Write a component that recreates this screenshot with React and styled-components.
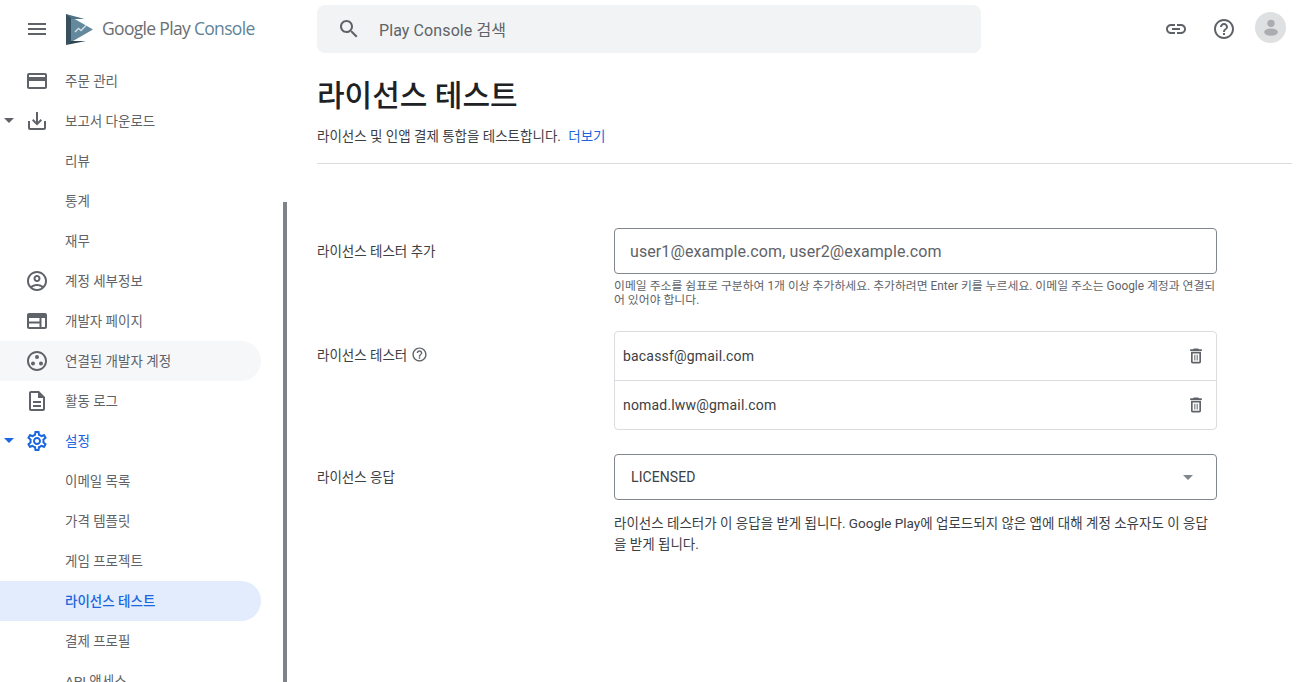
import React from "react";
import styled, { createGlobalStyle } from "styled-components";

const ICONS = {
  menu: "M3 18h18v-2H3v2zm0-5h18v-2H3v2zm0-7v2h18V6H3z",
  card: "M20 4H4c-1.11 0-1.99.89-1.99 2L2 18c0 1.11.89 2 2 2h16c1.11 0 2-.89 2-2V6c0-1.11-.89-2-2-2zm0 14H4v-6h16v6zm0-10H4V6h16v2z",
  download: "M19 12v7H5v-7H3v7c0 1.1.9 2 2 2h14c1.1 0 2-.9 2-2v-7h-2zm-6 .67l2.59-2.58L17 11.5l-5 5-5-5 1.41-1.41L11 12.67V3h2z",
  account: "M12 2C6.48 2 2 6.48 2 12s4.48 10 10 10 10-4.48 10-10S17.52 2 12 2zM7.35 18.5C8.66 17.56 10.26 17 12 17s3.34.56 4.65 1.5c-1.31.94-2.91 1.5-4.65 1.5s-3.34-.56-4.65-1.5zm10.79-1.38C16.45 15.8 14.32 15 12 15s-4.45.8-6.14 2.12C4.7 15.73 4 13.95 4 12c0-4.42 3.58-8 8-8s8 3.58 8 8c0 1.95-.7 3.73-1.86 5.12zM12 6c-1.93 0-3.5 1.57-3.5 3.5S10.07 13 12 13s3.5-1.57 3.5-3.5S13.93 6 12 6zm0 5c-.83 0-1.5-.67-1.5-1.5S11.17 8 12 8s1.5.67 1.5 1.5S12.83 11 12 11z",
  web: "M20 4H4c-1.1 0-1.99.9-1.99 2L2 18c0 1.1.9 2 2 2h16c1.1 0 2-.9 2-2V6c0-1.1-.9-2-2-2zM4 9h10.5v3.5H4V9zm0 5.5h10.5V18H4v-3.5zM20 18h-3.5V9H20v9z",
  linked: "M12 2C6.48 2 2 6.48 2 12s4.48 10 10 10 10-4.48 10-10S17.52 2 12 2zm0 18c-4.41 0-8-3.59-8-8s3.59-8 8-8 8 3.59 8 8-3.59 8-8 8zM12 6a2 2 0 1 0 0 4 2 2 0 0 0 0-4zM8 12.5a2 2 0 1 0 0 4 2 2 0 0 0 0-4zM16 12.5a2 2 0 1 0 0 4 2 2 0 0 0 0-4z",
  file: "M8 16h8v2H8zm0-4h8v2H8zm6-10H6c-1.1 0-2 .9-2 2v16c0 1.1.89 2 1.99 2H18c1.1 0 2-.9 2-2V8l-6-6zm4 18H6V4h7v5h5v11z",
  settings: "M19.43 12.98c.04-.32.07-.64.07-.98 0-.34-.03-.66-.07-.98l2.11-1.65c.19-.15.24-.42.12-.64l-2-3.46c-.09-.16-.26-.25-.44-.25-.06 0-.12.01-.17.03l-2.49 1c-.52-.4-1.08-.73-1.69-.98l-.38-2.65C14.46 2.18 14.25 2 14 2h-4c-.25 0-.46.18-.49.42l-.38 2.65c-.61.25-1.17.59-1.69.98l-2.49-1c-.06-.02-.12-.03-.18-.03-.17 0-.34.09-.43.25l-2 3.46c-.13.22-.07.49.12.64l2.11 1.65c-.04.32-.07.65-.07.98 0 .33.03.66.07.98l-2.11 1.65c-.19.15-.24.42-.12.64l2 3.46c.09.16.26.25.44.25.06 0 .12-.01.17-.03l2.49-1c.52.4 1.08.73 1.69.98l.38 2.65c.03.24.24.42.49.42h4c.25 0 .46-.18.49-.42l.38-2.65c.61-.25 1.17-.59 1.69-.98l2.49 1c.06.02.12.03.18.03.17 0 .34-.09.43-.25l2-3.46c.12-.22.07-.49-.12-.64l-2.11-1.65zm-1.98-1.71c.04.31.05.52.05.73 0 .21-.02.43-.05.73l-.14 1.13.89.7 1.08.84-.7 1.21-1.27-.51-1.04-.42-.9.68c-.43.32-.84.56-1.25.73l-1.06.43-.16 1.13-.2 1.35h-1.4l-.19-1.35-.16-1.13-1.06-.43c-.43-.18-.83-.41-1.23-.71l-.91-.7-1.06.43-1.27.51-.7-1.21 1.08-.84.89-.7-.14-1.13c-.03-.31-.05-.54-.05-.74s.02-.43.05-.73l.14-1.13-.89-.7-1.08-.84.7-1.21 1.27.51 1.04.42.9-.68c.43-.32.84-.56 1.25-.73l1.06-.43.16-1.13.2-1.35h1.39l.19 1.35.16 1.13 1.06.43c.43.18.83.41 1.23.71l.91.7 1.06-.43 1.27-.51.7 1.21-1.07.85-.89.7.14 1.13zM12 8c-2.21 0-4 1.79-4 4s1.79 4 4 4 4-1.79 4-4-1.79-4-4-4zm0 6c-1.1 0-2-.9-2-2s.9-2 2-2 2 .9 2 2-.9 2-2 2z",
  search: "M15.5 14h-.79l-.28-.27C15.41 12.59 16 11.11 16 9.5 16 5.91 13.09 3 9.5 3S3 5.91 3 9.5 5.91 16 9.5 16c1.61 0 3.09-.59 4.23-1.57l.27.28v.79l5 4.99L20.49 19l-4.99-5zm-6 0C7.01 14 5 11.99 5 9.5S7.01 5 9.5 5 14 7.01 14 9.5 11.99 14 9.5 14z",
  link: "M3.9 12c0-1.71 1.39-3.1 3.1-3.1h4V7H7c-2.76 0-5 2.24-5 5s2.24 5 5 5h4v-1.9H7c-1.71 0-3.1-1.39-3.1-3.1zM8 13h8v-2H8v2zm9-6h-4v1.9h4c1.71 0 3.1 1.39 3.1 3.1s-1.39 3.1-3.1 3.1h-4V17h4c2.76 0 5-2.24 5-5s-2.24-5-5-5z",
  help: "M11 18h2v-2h-2v2zm1-16C6.48 2 2 6.48 2 12s4.48 10 10 10 10-4.48 10-10S17.52 2 12 2zm0 18c-4.41 0-8-3.59-8-8s3.59-8 8-8 8 3.59 8 8-3.59 8-8 8zm0-14c-2.21 0-4 1.79-4 4h2c0-1.1.9-2 2-2s2 .9 2 2c0 2-3 1.75-3 5h2c0-2.25 3-2.5 3-5 0-2.21-1.79-4-4-4z",
  trash: "M16 9v10H8V9h8m-1.5-6h-5l-1 1H5v2h14V4h-3.5l-1-1zM18 7H6v12c0 1.1.9 2 2 2h8c1.1 0 2-.9 2-2V7zM10 10.5h1.2v7H10zM12.8 10.5H14v7h-1.2z",
};

const NAV = [
  { label: "주문 관리", icon: "card" },
  { label: "보고서 다운로드", icon: "download", caret: true },
  { label: "리뷰" },
  { label: "통계" },
  { label: "재무" },
  { label: "계정 세부정보", icon: "account" },
  { label: "개발자 페이지", icon: "web" },
  { label: "연결된 개발자 계정", icon: "linked", hovered: true },
  { label: "활동 로그", icon: "file" },
  { label: "설정", icon: "settings", caret: true, blue: true },
  { label: "이메일 목록" },
  { label: "가격 템플릿" },
  { label: "게임 프로젝트" },
  { label: "라이선스 테스트", selected: true },
  { label: "결제 프로필" },
  { label: "API 액세스" },
];

const GlobalStyle = createGlobalStyle`
  html, body {
    margin: 0;
    height: 100%;
    overflow: hidden;
    background: #fff;
  }
  body {
    font-family: Roboto, "Noto Sans CJK KR", sans-serif;
    color: #202124;
  }
`;

const Page = styled.div`
  height: 682px;
  display: flex;
  flex-direction: column;
  overflow: hidden;
`;

const TopBar = styled.header`
  height: 61px;
  flex: none;
  display: flex;
  align-items: flex-start;
`;

const Brand = styled.div`
  width: 317px;
  height: 58px;
  flex: none;
  display: flex;
  align-items: center;
  padding-left: 25px;
  box-sizing: border-box;
`;

const LogoMark = styled.svg`
  display: block;
  flex: none;
  margin-left: 1px;
`;

const LogoText = styled.span`
  margin-left: 8px;
  padding-bottom: 3px;
  font-family: "Open Sans", sans-serif;
  font-size: 17.5px;
  letter-spacing: -0.68px;
  white-space: nowrap;
  color: #6b6e71;
  b {
    font-weight: 400;
    color: #5f8497;
  }
`;

const SearchBox = styled.div`
  width: 664px;
  height: 48px;
  margin-top: 5px;
  flex: none;
  border-radius: 8px;
  background: #f1f3f4;
  display: flex;
  align-items: center;
  padding-left: 20px;
  box-sizing: border-box;
  gap: 18px;
  font-size: 16px;
  letter-spacing: 0.1px;
  color: #5f6368;
`;

const TopActions = styled.div`
  flex: 1;
  height: 58px;
  display: flex;
  align-items: center;
  justify-content: flex-end;
  padding-right: 18px;
  gap: 24px;
`;

const Avatar = styled.div`
  width: 31px;
  height: 31px;
  margin: 0 0 4px -5px;
  border-radius: 50%;
  background: #dfe0e1;
  display: flex;
  align-items: center;
  justify-content: center;
`;

const Body = styled.div`
  flex: 1;
  min-height: 0;
  display: flex;
`;

const Sidebar = styled.nav`
  position: relative;
  width: 287px;
  flex: none;
  overflow: hidden;
`;

const ScrollThumb = styled.div`
  position: absolute;
  right: 0;
  top: 141px;
  bottom: 0;
  width: 4px;
  background: #7f8389;
`;

const NavRow = styled.div`
  position: relative;
  width: 261px;
  height: 40px;
  display: flex;
  align-items: center;
  padding-left: 25px;
  box-sizing: border-box;
  border-radius: 0 20px 20px 0;
  font-size: 13.5px;
  font-weight: ${(p) => (p.$selected ? 500 : 400)};
  color: ${(p) => (p.$blue || p.$selected ? "#1a66e0" : "#5f6368")};
  background: ${(p) => (p.$selected ? "#e2ecfd" : p.$hovered ? "#f6f7f9" : "transparent")};
`;

const NavLabel = styled.span`
  padding-bottom: 3px;
  white-space: nowrap;
`;

const Caret = styled.span`
  position: absolute;
  left: 4px;
  top: 17px;
  border-left: 5px solid transparent;
  border-right: 5px solid transparent;
  border-top: 5px solid ${(p) => (p.$blue ? "#1a66e0" : "#5f6368")};
`;

const IconSlot = styled.span`
  width: 24px;
  height: 24px;
  flex: none;
  margin-right: 16px;
`;

const Main = styled.main`
  flex: 1;
  min-width: 0;
  padding: 0 12px 0 30px;
`;

const Title = styled.h1`
  margin: 15px 0 0;
  height: 40px;
  line-height: 40px;
  font-size: 30px;
  font-weight: 500;
  color: #202124;
`;

const Intro = styled.p`
  margin: 10px 0 0;
  height: 20px;
  line-height: 20px;
  font-size: 13.5px;
  color: #3c4043;
  a {
    margin-left: 4px;
    color: #1a66e0;
    text-decoration: none;
  }
`;

const Divider = styled.hr`
  margin: 17px 0 0;
  border: 0;
  border-top: 1px solid #dadce0;
`;

const Form = styled.div`
  margin-top: 64px;
  display: grid;
  grid-template-columns: 297px 603px;
`;

const FieldLabel = styled.div`
  display: flex;
  align-items: center;
  gap: 4px;
  box-sizing: border-box;
  padding-bottom: 3px;
  height: ${(p) => p.$height}px;
  font-size: 13.5px;
  color: #3c4043;
`;

const Control = styled.div`
  margin-bottom: ${(p) => p.$gap}px;
`;

const TextBox = styled.div`
  height: 46px;
  box-sizing: border-box;
  border: 1px solid #80868b;
  border-radius: 4px;
  display: flex;
  align-items: center;
  padding: 0 15px;
  font-size: 16px;
  letter-spacing: 0.09px;
  color: #5f6368;
`;

const SelectBox = styled(TextBox)`
  justify-content: space-between;
  padding: 0 23px 0 16px;
  font-size: 14px;
  color: #3c4043;
`;

const SelectCaret = styled.span`
  border-left: 5px solid transparent;
  border-right: 5px solid transparent;
  border-top: 5px solid #80868b;
`;

const Hint = styled.p`
  margin: 5px 0 0;
  font-size: 11.85px;
  line-height: 14px;
  color: #5f6368;
`;

const Note = styled.p`
  margin: 13px 0 0;
  font-size: 13.5px;
  line-height: 21px;
  color: #3c4043;
`;

const TesterList = styled.div`
  border: 1px solid #dadce0;
  border-radius: 4px;
`;

const TesterRow = styled.div`
  height: 48px;
  display: flex;
  align-items: center;
  justify-content: space-between;
  padding: 0 10px 0 8px;
  font-size: 14px;
  letter-spacing: 0.18px;
  color: #3c4043;
  & + & {
    border-top: 1px solid #dadce0;
  }
`;

function Icon({ name, size = 24, color = "#5f6368" }) {
  return (
    <svg width={size} height={size} viewBox="0 0 24 24" fill={color} style={{ display: "block", flex: "none" }}>
      <path d={ICONS[name]} />
    </svg>
  );
}

function Logo() {
  return (
    <LogoMark width="28" height="31" viewBox="0 0 28 31">
      <path d="M0 0 L27 15.5 L0 31 Z" fill="#64899d" />
      <path d="M0 0 L5 5 H18.5 L0 0 Z" fill="#4e7286" />
      <path d="M0 0 L5 4 V27 L0 31 Z" fill="#37505f" />
      <path d="M0 31 L5 27 H20 L0 31 Z" fill="#2f4552" />
      <path d="M9 18 L12.5 14.5 L15 16.5 L20 11.5" fill="none" stroke="#cfdde5" strokeWidth="1.5" />
    </LogoMark>
  );
}

export default function App() {
  return (
    <Page>
      <GlobalStyle />
      <TopBar>
        <Brand>
          <IconSlot>
            <Icon name="menu" />
          </IconSlot>
          <Logo />
          <LogoText>
            Google Play <b>Console</b>
          </LogoText>
        </Brand>
        <SearchBox>
          <Icon name="search" />
          Play Console 검색
        </SearchBox>
        <TopActions>
          <Icon name="link" />
          <Icon name="help" />
          <Avatar>
            <svg width="22" height="22" viewBox="0 0 24 24" fill="#a9adb1">
              <circle cx="12" cy="8" r="4" />
              <ellipse cx="12" cy="17.5" rx="7.5" ry="4" />
            </svg>
          </Avatar>
        </TopActions>
      </TopBar>
      <Body>
        <Sidebar>
          {NAV.map((item) => (
            <NavRow key={item.label} $blue={item.blue} $selected={item.selected} $hovered={item.hovered}>
              {item.caret && <Caret $blue={item.blue} />}
              <IconSlot>{item.icon && <Icon name={item.icon} color={item.blue ? "#1a66e0" : "#5f6368"} />}</IconSlot>
              <NavLabel>{item.label}</NavLabel>
            </NavRow>
          ))}
          <ScrollThumb />
        </Sidebar>
        <Main>
          <Title>라이선스 테스트</Title>
          <Intro>
            라이선스 및 인앱 결제 통합을 테스트합니다. <a href="#more">더보기</a>
          </Intro>
          <Divider />
          <Form>
            <FieldLabel $height={46}>라이선스 테스터 추가</FieldLabel>
            <Control $gap={24}>
              <TextBox>user1@example.com, user2@example.com</TextBox>
              <Hint>
                이메일 주소를 쉼표로 구분하여 1개 이상 추가하세요. 추가하려면 Enter 키를 누르세요. 이메일 주소는 Google 계정과 연결되어 있어야 합니다.
              </Hint>
            </Control>
            <FieldLabel $height={49}>
              라이선스 테스터
              <Icon name="help" size={17} />
            </FieldLabel>
            <Control $gap={24}>
              <TesterList>
                <TesterRow>
                  bacassf@gmail.com
                  <Icon name="trash" size={20} />
                </TesterRow>
                <TesterRow>
                  nomad.lww@gmail.com
                  <Icon name="trash" size={20} />
                </TesterRow>
              </TesterList>
            </Control>
            <FieldLabel $height={46}>라이선스 응답</FieldLabel>
            <Control $gap={0}>
              <SelectBox>
                LICENSED
                <SelectCaret />
              </SelectBox>
              <Note>
                라이선스 테스터가 이 응답을 받게 됩니다. Google Play에 업로드되지 않은 앱에 대해 계정 소유자도 이 응답을 받게 됩니다.
              </Note>
            </Control>
          </Form>
        </Main>
      </Body>
    </Page>
  );
}
